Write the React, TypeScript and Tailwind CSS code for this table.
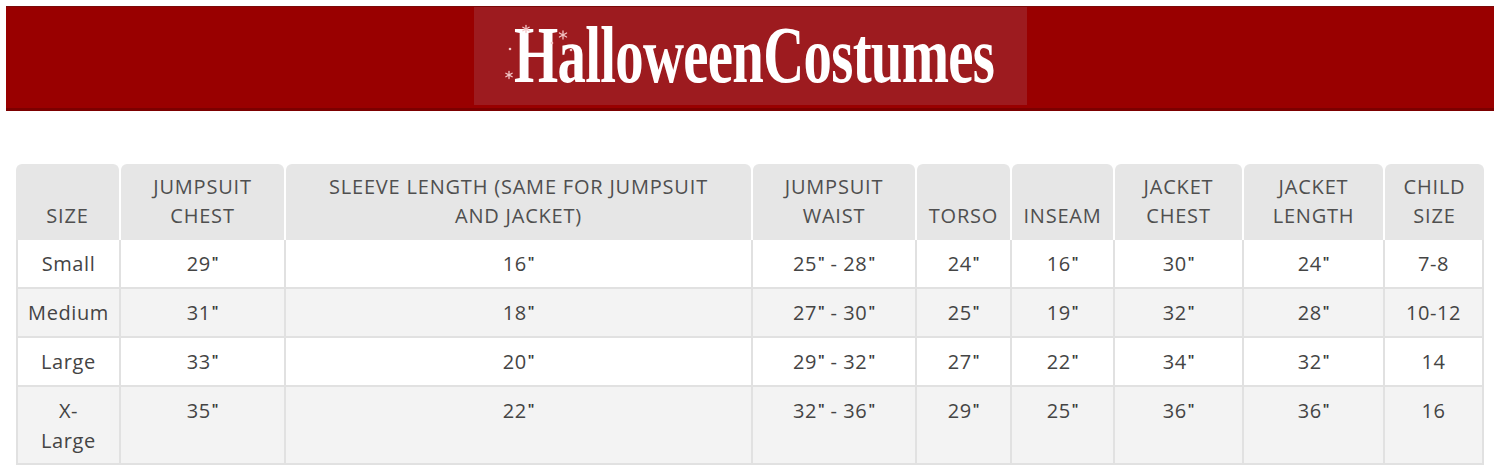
import React from "react";

const headers: string[][] = [
  ["SIZE"],
  ["JUMPSUIT", "CHEST"],
  ["SLEEVE LENGTH (SAME FOR JUMPSUIT", "AND JACKET)"],
  ["JUMPSUIT", "WAIST"],
  ["TORSO"],
  ["INSEAM"],
  ["JACKET", "CHEST"],
  ["JACKET", "LENGTH"],
  ["CHILD", "SIZE"],
];

const rows: string[][][] = [
  [["Small"], ["29\""], ["16\""], ["25\" - 28\""], ["24\""], ["16\""], ["30\""], ["24\""], ["7-8"]],
  [["Medium"], ["31\""], ["18\""], ["27\" - 30\""], ["25\""], ["19\""], ["32\""], ["28\""], ["10-12"]],
  [["Large"], ["33\""], ["20\""], ["29\" - 32\""], ["27\""], ["22\""], ["34\""], ["32\""], ["14"]],
  [["X-", "Large"], ["35\""], ["22\""], ["32\" - 36\""], ["29\""], ["25\""], ["36\""], ["36\""], ["16"]],
];

const gridCols = "grid grid-cols-[105px_165px_467px_164px_95px_103px_129px_141px_99px]";

function Measure({ text }: { text: string }) {
  const parts = text.split("\"");
  return (
    <>
      {parts.map((p, i) => (
        <React.Fragment key={i}>
          {p}
          {i < parts.length - 1 && (
            <span className="inline-block text-[14px] font-bold leading-none align-top mt-[6px] ml-[1px] mr-[1px] tracking-[-1px] text-[#3a3a3a]">"</span>
          )}
        </React.Fragment>
      ))}
    </>
  );
}

function Stars() {
  const star = (x: number, y: number, r: number) => (
    <g stroke="#f3c6c6" strokeWidth={1.3} strokeLinecap="round">
      <line x1={x} y1={y - r} x2={x} y2={y + r} />
      <line x1={x - r * 0.9} y1={y - r * 0.5} x2={x + r * 0.9} y2={y + r * 0.5} />
      <line x1={x - r * 0.9} y1={y + r * 0.5} x2={x + r * 0.9} y2={y - r * 0.5} />
    </g>
  );
  return (
    <svg className="absolute left-0 top-0" width="120" height="98" viewBox="0 0 120 98">
      {star(52, 22, 3.5)}
      {star(89, 28, 4)}
      {star(35, 68, 3.5)}
      <circle cx="36" cy="42" r="1.3" fill="#f3c6c6" />
      <circle cx="78" cy="36" r="1.3" fill="#f3c6c6" />
      <circle cx="97" cy="43" r="1.3" fill="#f3c6c6" />
    </svg>
  );
}

export default function App() {
  return (
    <div className="w-[1500px] h-[468px] bg-white overflow-hidden" style={{ fontFamily: "'Open Sans', 'Liberation Sans', sans-serif" }}>
      <div className="pt-[6px] px-[6px]">
        <div className="h-[105px] bg-[#990000] border-t border-[#7a0a0a] border-b-[3px] border-b-[#7c0000] flex justify-center">
          <div className="relative w-[553px] h-[98px] bg-[#9d1b1f] flex items-center justify-center">
            <span
              className="text-white text-[80px] font-bold leading-none tracking-[-1px] scale-x-[0.71] whitespace-nowrap mt-[-2px] ml-[8px]"
              style={{ fontFamily: "'Liberation Serif', 'DejaVu Serif', serif" }}
            >
              HalloweenCostumes
            </span>
            <Stars />
          </div>
        </div>
      </div>

      <div className="pl-[16px] pt-[53px]">
        <div className={gridCols + " w-[1468px]"}>
          {headers.map((h, i) => (
            <div key={i} className={i < headers.length - 1 ? "pr-[2px]" : ""}>
              <div className="h-[76px] bg-[#e6e6e6] rounded-t-[6px] flex flex-col justify-end items-center pb-[10px] text-[20px] leading-[29px] text-[#4f4f4f] tracking-[0.04em]">
                {h.map((l, j) => (
                  <div key={j} className="whitespace-nowrap">{l}</div>
                ))}
              </div>
            </div>
          ))}
          {rows.map((r, ri) =>
            r.map((c, ci) => (
              <div
                key={ri + "-" + ci}
                className={
                  (ri % 2 === 1 ? "bg-[#f3f3f3] " : "bg-white ") +
                  (ci === 0 ? "border-l-2 " : "") +
                  "border-r-2 border-b-2 border-[#e1e1e1] text-center text-[#444] text-[20px] leading-[30px] tracking-[0.03em] pt-[9px] " +
                  (ri === 3 ? "h-[78px]" : "h-[49px]")
                }
              >
                {c.map((l, j) => (
                  <div key={j}>
                    <Measure text={l} />
                  </div>
                ))}
              </div>
            ))
          )}
        </div>
      </div>
    </div>
  );
}
